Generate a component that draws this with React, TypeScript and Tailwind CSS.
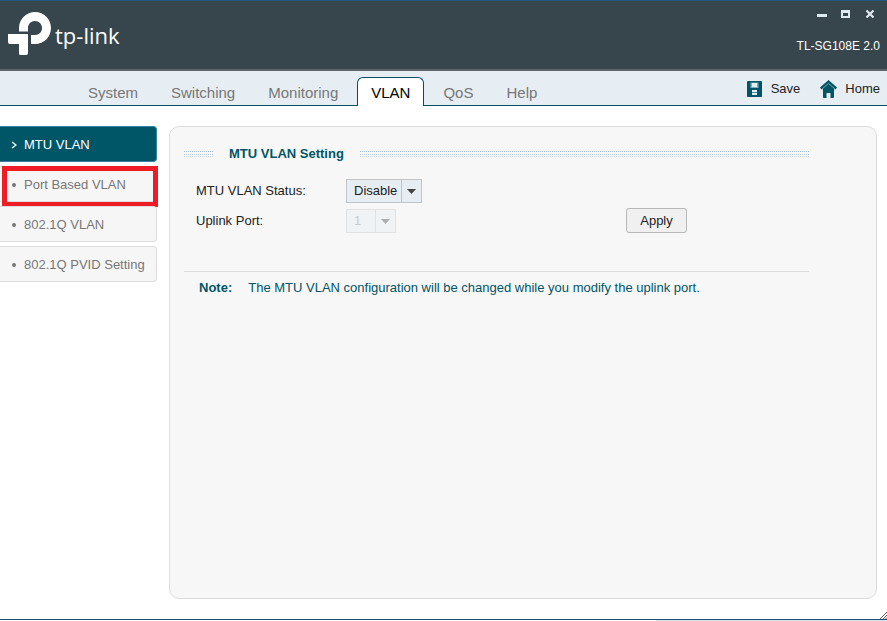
import React from "react";
import { twMerge } from "tailwind-merge";

const tabs = ["System", "Switching", "Monitoring", "VLAN", "QoS", "Help"];
const sideItems = ["MTU VLAN", "Port Based VLAN", "802.1Q VLAN", "802.1Q PVID Setting"];

function Logo() {
  return (
    <div className="flex items-start pl-2 pt-[11px] text-white">
      <svg width="44" height="44" viewBox="0 0 44 44" fill="currentColor" aria-hidden="true">
        <path d="M11 19.500V16A16 16 0 0 1 27 0C36 0 43 7 43 16C43 25 36 32 27 32H23V23H27C31 23 34 20 34 16C34 12 31 9 27 9C23 9 20 12 20 16V19.500Z" />
        <path d="M0 22H20V41Q20 43 18 43H12.500Q11 43 11 41.500V32H2Q0 32 0 30Z" />
      </svg>
      <span className="ml-[3px] mt-[7px] font-['Open_Sans',sans-serif] text-[22px] font-medium leading-8">tp-link</span>
    </div>
  );
}

function WindowButtons() {
  return (
    <div className="mr-[5px] flex gap-[14px] text-[#dfe9f1]">
      <button type="button" aria-label="Minimize">
        <svg width="10" height="10" viewBox="0 0 10 10"><path d="M0 5h10v3H0z" fill="currentColor" /></svg>
      </button>
      <button type="button" aria-label="Maximize">
        <svg width="10" height="10" viewBox="0 0 10 10"><path fillRule="evenodd" d="M0 1h9v8H0zM2 4v3h5V4z" fill="currentColor" /></svg>
      </button>
      <button type="button" aria-label="Close">
        <svg width="10" height="10" viewBox="0 0 10 10"><path d="M1.500 1.500l7 7M8.500 1.500l-7 7" stroke="currentColor" strokeWidth="2.200" /></svg>
      </button>
    </div>
  );
}

function Dots({ className }: { className: string }) {
  const row = "h-px bg-[repeating-linear-gradient(90deg,currentColor_0_1px,transparent_1px_2px)]";
  return (
    <div className={twMerge("flex flex-col", className)} aria-hidden="true">
      <div className={twMerge(row, "text-[#9fbad6]")} />
      <div className={twMerge(row, "mt-0.5 text-[#b9cde0]")} />
      <div className={twMerge(row, "mt-px text-[#cdd7e0]")} />
    </div>
  );
}

function PickList({ id, value, options, disabled, className }: {
  id: string; value: string; options: string[]; disabled?: boolean; className: string;
}) {
  return (
    <div className={twMerge("relative h-6 border border-[#bfc4c6] bg-[#e6eef4]", disabled && "opacity-40", className)}>
      <select id={id} defaultValue={value} disabled={disabled} className="h-full w-full appearance-none pl-[7px] pr-5 text-[#222] opacity-100 outline-none disabled:text-[#888]">
        {options.map((o) => <option key={o}>{o}</option>)}
      </select>
      <span className="pointer-events-none absolute inset-y-0 right-0 flex w-5 items-center justify-center border-l border-[#bfc4c6]">
        <svg width="9" height="5" viewBox="0 0 9 5"><path d="M0 0h9L4.500 5z" fill="#444" /></svg>
      </span>
    </div>
  );
}

export default function App() {
  return (
    <div className="flex min-h-screen flex-col bg-white font-['Liberation_Sans',Arial,sans-serif] text-[13px] leading-4 text-[#222]">
      <header className="flex h-[71px] justify-between border-t border-b-2 border-t-[#1d5a80] border-b-[#5f666a] bg-[#37454c]">
        <Logo />
        <div className="flex flex-col items-end gap-[19px] pr-[7px] pt-2 text-white">
          <WindowButtons />
          <span className="text-xs leading-4">TL-SG108E 2.0</span>
        </div>
      </header>

      <nav className="flex h-[35px] justify-between border-b border-[#00505f] bg-[#e6eef4]">
        <div className="flex items-end gap-px pl-[72px]">
          {tabs.map((t) => (
            <a
              key={t}
              href="#"
              className={twMerge(
                "px-4 text-[15px] leading-6 text-[#777]",
                t === "VLAN" && "mx-0.5 -mb-px h-[29px] rounded-t-md border border-b-0 border-[#00505f] bg-white px-[13px] leading-[30px] text-black",
              )}
            >
              {t}
            </a>
          ))}
        </div>
        <div className="flex items-center gap-5 pr-[7px] pt-0.5">
          <a href="#" className="flex items-center gap-[9px]">
            <svg width="15" height="16" viewBox="0 0 15 16">
              <path d="M1 0h13q1 0 1 1v14q0 1-1 1H1q-1 0-1-1V1q0-1 1-1z" fill="#005566" />
              <path d="M3.500 1.500h8v5.500h-8z" fill="#7fb0bb" />
              <path d="M5 2h5v4H5z" fill="#e6eef4" />
              <path d="M5 9h5v5H5z" fill="#e6eef4" />
              <path d="M5 11h5v1H5z" fill="#4d8c98" />
            </svg>
            Save
          </a>
          <a href="#" className="flex items-center gap-2">
            <svg width="17" height="18" viewBox="0 0 17 18" fill="#005566">
              <path d="M8.500 0L17 7.500 15.500 9.500 14 9V17q0 1-1 1h-2.500v-5h-4v5H4q-1 0-1-1V9l-1.500.5L0 7.500z" />
              <path d="M2 9l6.500-5.500L15 9" fill="none" stroke="#6fa3ae" strokeWidth="1" />
            </svg>
            Home
          </a>
        </div>
      </nav>

      <main className="flex flex-1 gap-3 pb-5 pr-[10px] pt-5">
        <aside className="flex w-[157px] shrink-0 flex-col gap-1">
          {sideItems.map((s, i) => (
            <div key={s} className="relative">
              <a
                href="#"
                className={twMerge(
                  "flex h-9 items-center rounded-r border border-l-0 border-[#dcdcdc] bg-[#f6f6f6] pt-0.5 text-[#777]",
                  i === 0 && "border-[#3a80a0] bg-[#005566] text-white",
                )}
              >
                <span className="flex w-6 justify-center pl-1" aria-hidden="true">
                  {i === 0 ? (
                    <svg width="6" height="8" viewBox="0 0 6 8"><path d="M1 1l4 3-4 3" fill="none" stroke="#fff" strokeWidth="1.300" /></svg>
                  ) : (
                    <svg width="4" height="4" viewBox="0 0 4 4"><circle cx="2" cy="2" r="2" fill="#777" /></svg>
                  )}
                </span>
                {s}
              </a>
              {i === 1 && <div className="pointer-events-none absolute -bottom-[5px] -right-px left-0.5 top-0 border-[5px] border-[#ee1c24]" />}
            </div>
          ))}
        </aside>

        <section className="min-w-0 flex-1 rounded-[10px] border border-[#dcdcdc] bg-[#f7f7f7] pl-[14px] pr-[67px] pt-[19px]">
          <div className="flex items-center">
            <Dots className="w-[30px]" />
            <h1 className="ml-[15px] mr-4 font-bold text-[#005566]">MTU VLAN Setting</h1>
            <Dots className="flex-1" />
          </div>
          <form className="mt-4 flex items-end justify-between border-b border-[#dcdcdc] pb-[38px] pl-3 pt-px" onSubmit={(e) => e.preventDefault()}>
            <div className="grid grid-cols-[150px_auto] items-center justify-items-start gap-y-[6px]">
              <label htmlFor="status">MTU VLAN Status:</label>
              <PickList id="status" value="Disable" options={["Disable", "Enable"]} className="w-[76px]" />
              <label htmlFor="uplink">Uplink Port:</label>
              <PickList id="uplink" value="1" options={["1", "2", "3", "4", "5", "6", "7", "8"]} disabled className="w-[50px]" />
            </div>
            <button type="submit" className="mr-[122px] h-[25px] w-[61px] rounded-[3px] border border-[#b8b8b8] bg-[#f0f0f0]">Apply</button>
          </form>
          <p className="flex gap-4 pl-[15px] pt-2 text-[#005566]">
            <strong>Note:</strong>
            <span>The MTU VLAN configuration will be changed while you modify the uplink port.</span>
          </p>
        </section>
      </main>

      <footer className="relative h-0.5 border-t border-[#1d4f73]">
        <div className="ml-[74%] h-px bg-[#d5e5f0]" />
        <svg className="absolute bottom-0.5 right-0" width="7" height="7" viewBox="0 0 7 7"><path d="M0 7L7 0M3 7l4-4M5.500 7L7 5.500" stroke="#555" strokeWidth="1" /></svg>
      </footer>
    </div>
  );
}
